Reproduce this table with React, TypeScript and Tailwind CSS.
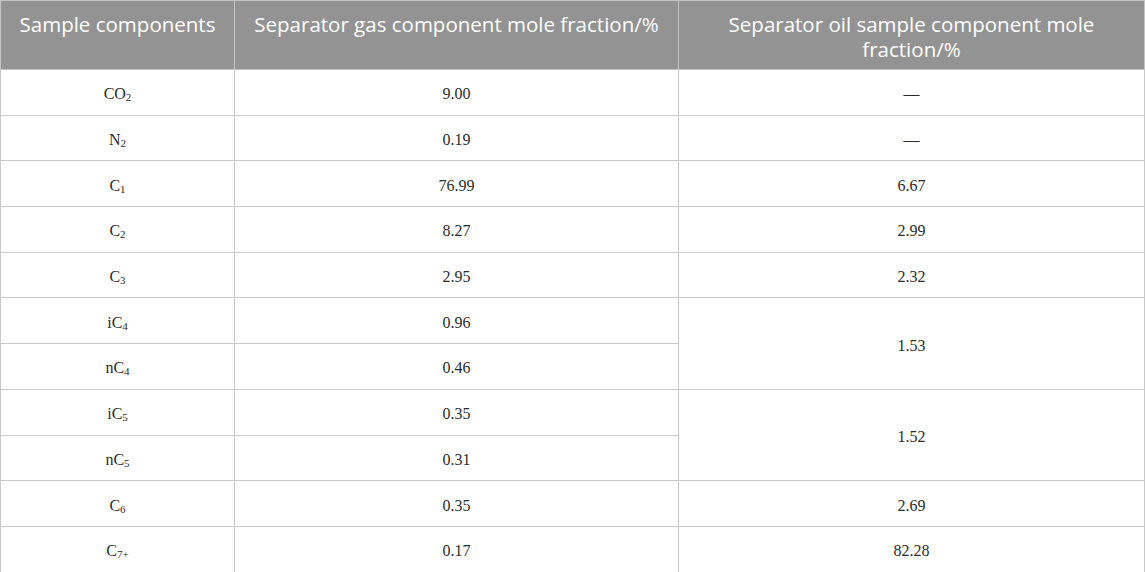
import { ReactNode } from "react";

type Row = {
  name: ReactNode;
  gas: string;
  oil?: string;
  oilSpan?: number;
};

function Chem({ base, sub, pre }: { base: string; sub: string; pre?: string }) {
  return (
    <span>
      {pre}
      {base}
      <sub className="text-[11px] relative top-[2px]">{sub}</sub>
    </span>
  );
}

const rows: Row[] = [
  { name: <Chem base="CO" sub="2" />, gas: "9.00", oil: "—" },
  { name: <Chem base="N" sub="2" />, gas: "0.19", oil: "—" },
  { name: <Chem base="C" sub="1" />, gas: "76.99", oil: "6.67" },
  { name: <Chem base="C" sub="2" />, gas: "8.27", oil: "2.99" },
  { name: <Chem base="C" sub="3" />, gas: "2.95", oil: "2.32" },
  { name: <Chem pre="i" base="C" sub="4" />, gas: "0.96", oil: "1.53", oilSpan: 2 },
  { name: <Chem pre="n" base="C" sub="4" />, gas: "0.46" },
  { name: <Chem pre="i" base="C" sub="5" />, gas: "0.35", oil: "1.52", oilSpan: 2 },
  { name: <Chem pre="n" base="C" sub="5" />, gas: "0.31" },
  { name: <Chem base="C" sub="6" />, gas: "0.35", oil: "2.69" },
  { name: <Chem base="C" sub="7+" />, gas: "0.17", oil: "82.28" },
];

export default function App() {
  return (
    <div className="w-[1145px] h-[572px] overflow-hidden bg-white">
      <table className="w-[1144px] border-collapse table-fixed">
        <colgroup>
          <col className="w-[234px]" />
          <col className="w-[444px]" />
          <col className="w-[466px]" />
        </colgroup>
        <thead>
          <tr className="h-[69px] bg-[#939393] text-white text-[20.5px] leading-[25px] font-['Open_Sans',sans-serif]">
            <th className="border border-[#c4c4c4] align-top pt-[11px] px-2 font-normal">Sample components</th>
            <th className="border border-[#c4c4c4] align-top pt-[11px] px-2 font-normal">
              Separator gas component mole fraction/%
            </th>
            <th className="border border-[#c4c4c4] align-top pt-[11px] px-9 font-normal">
              Separator oil sample component mole fraction/%
            </th>
          </tr>
        </thead>
        <tbody className="text-[16px] text-[#2b2b2b] font-['Liberation_Serif',serif]">
          {rows.map((r, i) => (
            <tr key={i} className="h-[45.7px]">
              <td className="border border-[#c8c8c8] text-center pt-[4px] pb-0 px-0">{r.name}</td>
              <td className="border border-[#c8c8c8] text-center pt-[4px] pb-0 px-0">{r.gas}</td>
              {r.oil !== undefined && (
                <td rowSpan={r.oilSpan ?? 1} className="border border-[#c8c8c8] text-center pt-[4px] pb-0 px-0">
                  {r.oil}
                </td>
              )}
            </tr>
          ))}
        </tbody>
      </table>
    </div>
  );
}
